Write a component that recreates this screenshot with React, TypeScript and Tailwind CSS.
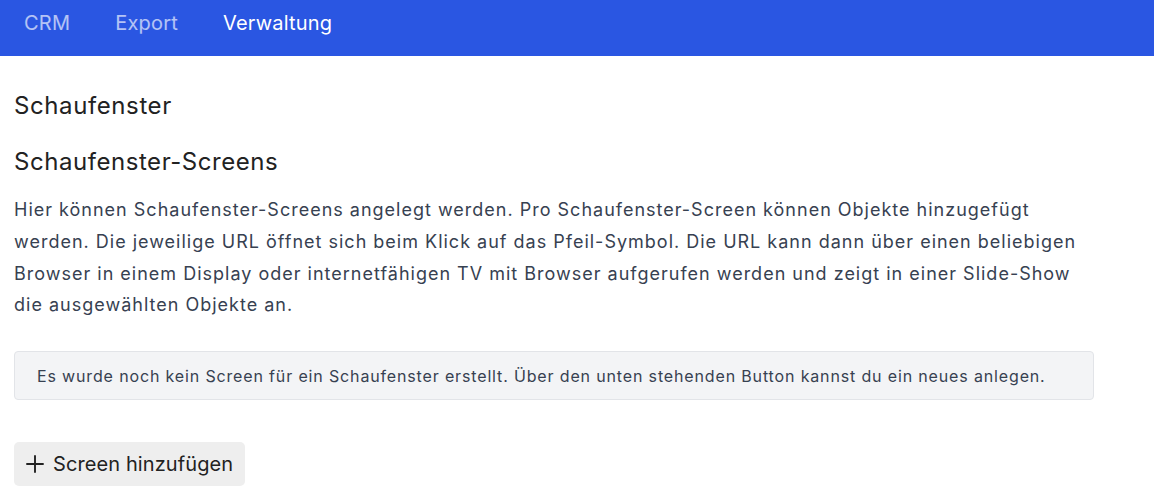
const navItems = [
  { label: 'CRM', active: false },
  { label: 'Export', active: false },
  { label: 'Verwaltung', active: true },
];

function PlusIcon() {
  return (
    <svg width="18" height="18" viewBox="0 0 18 18" fill="none" stroke="currentColor" strokeWidth="1.9" strokeLinecap="round">
      <path d="M1 9h16M9 1v16" />
    </svg>
  );
}

export default function App() {
  return (
    <div className="min-h-screen bg-white font-['Inter',sans-serif]">
      <header className="h-14 bg-[#2a56e2] flex items-center px-6 gap-[45px]">
        {navItems.map((item) => (
          <a
            key={item.label}
            href="#"
            className={`text-[20px] leading-none tracking-[0.2px] -mt-[10px] ${item.active ? 'text-white' : 'text-white/65'}`}
          >
            {item.label}
          </a>
        ))}
      </header>

      <main className="px-[14px] max-w-[1108px]">
        <h1 className="mt-[34px] text-[24px] leading-8 tracking-[0.6px] text-[#222]">Schaufenster</h1>
        <h2 className="mt-6 text-[24px] leading-8 tracking-[0.55px] text-[#222]">Schaufenster-Screens</h2>
        <p className="mt-[16px] text-[18px] leading-[31.8px] tracking-[1px] text-[#374151]">
          Hier können Schaufenster-Screens angelegt werden. Pro Schaufenster-Screen können Objekte hinzugefügt
          werden. Die jeweilige URL öffnet sich beim Klick auf das Pfeil-Symbol. Die URL kann dann über einen beliebigen
          Browser in einem Display oder internetfähigen TV mit Browser aufgerufen werden und zeigt in einer Slide-Show
          die ausgewählten Objekte an.
        </p>

        <div className="mt-[30px] h-[49px] flex items-center px-[22px] bg-[#f3f4f6] border border-[#e2e4e8] rounded-[4px] text-[16px] tracking-[0.85px] text-[#374151]">
          Es wurde noch kein Screen für ein Schaufenster erstellt. Über den unten stehenden Button kannst du ein neues anlegen.
        </div>

        <button className="mt-[42px] h-11 pl-3 pr-[12px] flex items-center gap-[9px] bg-[#eeeeee] rounded-[5px] text-[20px] tracking-[0.1px] text-[#222]">
          <PlusIcon />
          Screen hinzufügen
        </button>
      </main>
    </div>
  );
}
